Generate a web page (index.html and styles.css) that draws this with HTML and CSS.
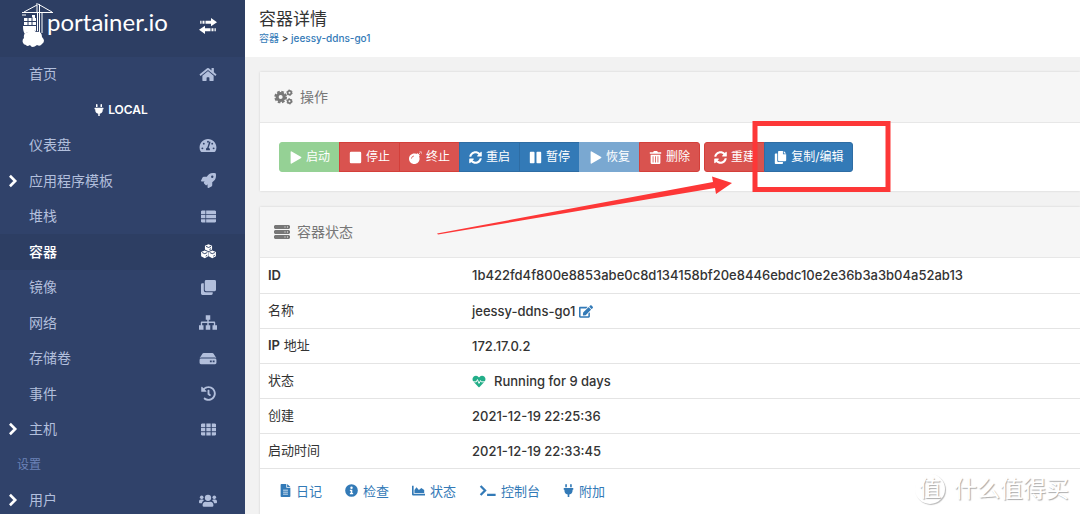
FILE: index.html
```html
<!DOCTYPE html>
<html lang="zh-CN">
<head>
<meta charset="utf-8">
<title>容器详情</title>
<link rel="stylesheet" href="styles.css">
</head>
<body>
<svg class="sprite" aria-hidden="true">
  <symbol id="home" viewBox="0 0 576 512"><path d="M280.37 148.26L96 300.11V464a16 16 0 0 0 16 16l112.06-.29a16 16 0 0 0 15.92-16V368a16 16 0 0 1 16-16h64a16 16 0 0 1 16 16v95.64a16 16 0 0 0 16 16.05L464 480a16 16 0 0 0 16-16V300L295.67 148.26a12.19 12.19 0 0 0-15.3 0zM571.6 251.47L488 182.56V44.05a12 12 0 0 0-12-12h-56a12 12 0 0 0-12 12v72.61L318.47 43a48 48 0 0 0-61 0L4.34 251.47a12 12 0 0 0-1.6 16.9l25.5 31A12 12 0 0 0 45.15 301l235.22-193.74a12.19 12.19 0 0 1 15.3 0L530.9 301a12 12 0 0 0 16.9-1.6l25.5-31a12 12 0 0 0-1.7-16.93z"/></symbol>
  <symbol id="plug" viewBox="0 0 384 512"><path d="M320 32a32 32 0 0 0-64 0v96h64zm48 128H16A16 16 0 0 0 0 176v32a16 16 0 0 0 16 16h16v32a160.07 160.07 0 0 0 128 156.8V512h64v-99.2A160.07 160.07 0 0 0 352 256v-32h16a16 16 0 0 0 16-16v-32a16 16 0 0 0-16-16zM128 32a32 32 0 0 0-64 0v96h64z"/></symbol>
  <symbol id="gauge" viewBox="0 0 576 512"><path fill-rule="evenodd" d="M288 32C129 32 0 161 0 320c0 53 14 102 39 145 6 10 16 15 27 15h444c11 0 21-5 27-15 25-43 39-92 39-145C576 161 447 32 288 32zM288 96a32 32 0 1 1 0 64 32 32 0 0 1 0-64zM96 384a32 32 0 1 1 0-64 32 32 0 0 1 0 64zm48-160a32 32 0 1 1 0-64 32 32 0 0 1 0 64zm206 192H226c-15-35-3-82 38-94l61-184c4-13 18-20 30-16 13 4 20 18 16 30l-61 184c38 17 54 50 40 80zm82-192a32 32 0 1 1 0-64 32 32 0 0 1 0 64zm48 160a32 32 0 1 1 0-64 32 32 0 0 1 0 64z"/></symbol>
  <symbol id="rocket" viewBox="0 0 512 512"><path d="M505.12 19.09c-1.19-5.53-6.66-11-12.21-12.18C460.72 0 435.51 0 410.41 0 307.18 0 245.27 55.2 199.05 128H94.84c-16.35.02-35.56 11.88-42.89 26.48L2.52 253.3A28.4 28.4 0 0 0 0 264a24 24 0 0 0 24 24h103.82l-22.48 22.47c-11.36 11.36-13 32.26 0 45.25l50.91 50.9c11.15 11.19 32.15 13.16 45.27 0L224 384.16V488a24 24 0 0 0 24 24 28.56 28.56 0 0 0 10.71-2.52l98.73-49.39c14.63-7.3 26.51-26.5 26.51-42.86V312.8C456.54 266.48 512 204.39 512 101.7c.08-25.2.08-50.4-6.88-82.61zM384.04 168a40 40 0 1 1 40-40 40 40 0 0 1-40 40z"/></symbol>
  <symbol id="list" viewBox="0 0 16 16"><path d="M1 1.5h3.7v3.7H0V2.5zM5.5 1.5H15l1 1v2.7H5.500zM0 6.100h4.700v3.800H0zM5.500 6.100H16v3.800H5.500zM0 10.800h4.700v3.700H1l-1-1zM5.500 10.800H16v2.700l-1 1H5.500z"/></symbol>
  <symbol id="cubes" viewBox="0 0 16 16"><path d="M8 .3l3.800 1.600v4L8 7.700 4.200 5.900V1.900zM4 6.900l3.800 1.700v4.400L4 15.100.100 13V8.600zM12 6.900l3.900 1.700V13L12 15.100 8.200 13V8.600z"/><path class="cut" d="M5.300 2.500L8 3.700l2.700-1.200M9 5.800l1.700-.8M1.200 9.100L4 10.300l2.700-1.200M5 13l1.600-1M9.300 9.100l2.700 1.200 2.800-1.200M13 13l1.700-1"/></symbol>
  <symbol id="clone" viewBox="0 0 16 16"><path d="M5.500 0h9A1.500 1.500 0 0 1 16 1.500v9a1.500 1.500 0 0 1-1.500 1.500h-9A1.500 1.500 0 0 1 4 10.500v-9A1.500 1.500 0 0 1 5.500 0zM3 3.500V11a2 2 0 0 0 2 2h7.500v1.500A1.500 1.500 0 0 1 11 16H1.500A1.500 1.500 0 0 1 0 14.500V5a1.500 1.500 0 0 1 1.500-1.500z"/></symbol>
  <symbol id="sitemap" viewBox="0 0 20 16"><path d="M7.500 0h5v5h-1.700v2H17q1 0 1 1v3h2v5h-5v-5h1.500V8.500h-5.700V11h1.700v5h-5v-5h1.700V8.500H3.500V11H5v5H0v-5h2V8q0-1 1-1h6.200V5H7.500z"/></symbol>
  <symbol id="disk" viewBox="0 0 18 16"><path fill-rule="evenodd" d="M4.500 2h9q1 0 1.500.8L18 7.600Q17.400 7 16 7H2Q.600 7 0 7.600L3 2.800Q3.500 2 4.500 2zM1.500 8h15Q18 8 18 9.500v3q0 1.500-1.500 1.500h-15Q0 14 0 12.500v-3Q0 8 1.500 8zM11 10v2h2v-2zM14 10v2h2v-2z"/></symbol>
  <symbol id="history" viewBox="0 0 512 512"><path d="M504 255.53c.25 136.64-111.18 248.37-247.82 248.47-59 .04-113.22-20.53-155.82-54.91-11.08-8.94-11.9-25.54-1.84-35.61l11.27-11.26c8.6-8.61 22.35-9.56 31.89-1.99C173.06 425.14 212.78 440 256 440c101.7 0 184-82.31 184-184 0-101.7-82.31-184-184-184-48.81 0-93.15 18.97-126.07 49.93l50.76 50.76c10.08 10.08 2.94 27.31-11.32 27.31H24c-8.84 0-16-7.16-16-16V38.63c0-14.26 17.23-21.4 27.31-11.32l49.38 49.38C129.21 34.14 189.55 8 256 8c136.81 0 247.75 110.78 248 247.53zm-180.91 78.79l9.82-12.63c8.14-10.47 6.25-25.55-4.21-33.68L288 256.35V152c0-13.25-10.75-24-24-24h-16c-13.25 0-24 10.75-24 24v135.65l65.41 50.88c10.46 8.13 25.54 6.25 33.68-4.21z"/></symbol>
  <symbol id="grid" viewBox="0 0 16 16"><path d="M0 2.500l1-1h3.500v3.700H0zM5.700 1.500h4.600v3.700H5.700zM11.500 1.500H15l1 1v2.700h-4.500zM0 6.200h4.500v3.600H0zM5.700 6.200h4.600v3.600H5.700zM11.500 6.200H16v3.600h-4.500zM0 10.800h4.500v3.700H1l-1-1zM5.700 10.800h4.600v3.700H5.700zM11.500 10.800H16v2.700l-1 1h-3.500z"/></symbol>
  <symbol id="users" viewBox="0 0 20 16"><circle cx="10" cy="5" r="3.500"/><circle cx="3" cy="4.500" r="2"/><circle cx="17" cy="4.500" r="2"/><path d="M4 13.500V13q0-3.500 3.500-3.700 2.500 1 5 0Q16 9.500 16 13v.5q0 1.500-1.500 1.500h-9Q4 15 4 13.500zM0 10V9q0-2 2-2h2q1 0 1.500.6Q3.500 8.700 3.200 11H1q-1 0-1-1zM20 10V9q0-2-2-2h-2q-1 0-1.500.6 2 1.100 2.300 3.400H19q1 0 1-1z"/></symbol>
  <symbol id="chevron" viewBox="0 0 16 16"><path d="M4.500 2l6 6-6 6" fill="none" stroke="currentColor" stroke-width="3"/></symbol>
  <symbol id="swap" viewBox="0 0 18 16"><path d="M12 0l6 4.200-6 4V5.700H6.500v-3H12zM3.500 2.700h2v3h-2zM1.200 2.700h1.300v3H1.200zM6 7.800v2.500h5.500v3H6V16l-6-4.200zM12.500 10.300h2v3h-2zM15.500 10.300h1.300v3h-1.300z"/></symbol>
  <symbol id="cogs" viewBox="0 0 20 16"><g fill="none" stroke="currentColor"><circle cx="7" cy="8" r="3.700" stroke-width="3.200"/><circle cx="7" cy="8" r="5.700" stroke-width="2" stroke-dasharray="2.800 1.680"/><circle cx="16.300" cy="3.500" r="1.900" stroke-width="1.700"/><circle cx="16.300" cy="3.500" r="2.900" stroke-width="1" stroke-dasharray="1.500 1.540"/><circle cx="16.300" cy="12.500" r="1.900" stroke-width="1.700"/><circle cx="16.300" cy="12.500" r="2.900" stroke-width="1" stroke-dasharray="1.500 1.540"/></g></symbol>
  <symbol id="server" viewBox="0 0 16 16"><path fill-rule="evenodd" d="M1 1h14l1 1v2l-1 1H1L0 4V2zM1 6h14l1 1v2l-1 1H1L0 9V7zM1 11h14l1 1v2l-1 1H1l-1-1v-2zM10.500 2.500v1h1v-1zM13 2.500v1h1v-1zM10.500 7.500v1h1v-1zM13 7.500v1h1v-1zM10.500 12.500v1h1v-1zM13 12.500v1h1v-1z"/></symbol>
  <symbol id="play" viewBox="0 0 16 16"><path d="M2 1.200Q2-.300 3.300.500l11.200 6.600q1.500.900 0 1.800L3.300 15.500Q2 16.300 2 14.800z"/></symbol>
  <symbol id="stop" viewBox="0 0 16 16"><rect x="1" y="1" width="14" height="14" rx="1.500"/></symbol>
  <symbol id="pause" viewBox="0 0 16 16"><rect x="1" y="1" width="5.800" height="14" rx="1"/><rect x="9.200" y="1" width="5.800" height="14" rx="1"/></symbol>
  <symbol id="bomb" viewBox="0 0 512 512"><path d="M440.500 88.500l-52 52L415 167c9.400 9.400 9.400 24.600 0 33.900l-17.400 17.400c11.800 26.100 18.400 55.100 18.400 85.600 0 114.900-93.100 208-208 208S0 418.900 0 304 93.100 96 208 96c30.500 0 59.500 6.600 85.600 18.400L311 97c9.400-9.400 24.600-9.400 33.900 0l26.500 26.500 52-52zM448 0h16v55h-16zM457 64h55v16h-55zM470 50l30-34 10 10-32 32zM410 16l34 34-10 10-34-34zM470 90l10-10 30 34-10 10z"/><path class="cut wide" d="M95 300q5-90 100-105"/></symbol>
  <symbol id="sync" viewBox="0 0 512 512"><path d="M370.720 133.280C339.460 104 298.890 87.960 255.850 88c-77.460.070-144.330 53.180-162.790 126.850-1.350 5.360-6.130 9.150-11.650 9.150H24.100c-7.500 0-13.190-6.810-11.800-14.180C33.930 94.920 134.810 8 256 8c66.450 0 126.790 26.140 171.320 68.690L463 41c15.150-15.150 41-4.440 41 16.940V192c0 13.250-10.750 24-24 24H345.940c-21.380 0-32.090-25.850-16.970-40.970zM32 296h134.060c21.380 0 32.090 25.850 16.970 40.970l-41.750 41.750c31.260 29.270 71.840 45.320 114.880 45.280 77.420-.070 144.310-53.140 162.780-126.850 1.350-5.360 6.130-9.150 11.650-9.150h57.310c7.500 0 13.190 6.810 11.800 14.180C478.070 417.080 377.190 504 256 504c-66.450 0-126.790-26.140-171.320-68.690L49 471c-15.150 15.150-41 4.440-41-16.940V320c0-13.250 10.750-24 24-24z"/></symbol>
  <symbol id="trash" viewBox="0 0 16 16"><path fill-rule="evenodd" d="M1 1.500h4L6 0h4l1 1.500h4v2H1zM2 4.500h12v10Q14 16 12.500 16h-9Q2 16 2 14.500zM4.500 6.500V14h1V6.500zM7.500 6.500V14h1V6.500zM10.500 6.500V14h1V6.500z"/></symbol>
  <symbol id="copy" viewBox="0 0 16 16"><path d="M6 0h5v4h4v7.500q0 1-1 1H6q-1 0-1-1V1q0-1 1-1zM12 0l3 3h-3zM4 3v9q0 1.500 1.500 1.500H11V15q0 1-1 1H2q-1 0-1-1V4q0-1 1-1z"/></symbol>
  <symbol id="edit" viewBox="0 0 576 512"><path d="M402.600 83.200l90.200 90.200c3.800 3.800 3.800 10 0 13.800L274.400 405.600l-92.800 10.300c-12.400 1.400-22.900-9.100-21.500-21.500l10.300-92.800L388.800 83.200c3.800-3.800 10-3.800 13.800 0zm162-22.900l-48.800-48.800c-15.200-15.200-39.900-15.200-55.200 0l-35.400 35.400c-3.800 3.800-3.800 10 0 13.800l90.200 90.200c3.800 3.800 10 3.800 13.800 0l35.400-35.400c15.200-15.300 15.200-40 0-55.200zM384 346.200V448H64V128h229.800c3.200 0 6.200-1.300 8.500-3.500l40-40c7.600-7.600 2.200-20.500-8.500-20.500H48C21.500 64 0 85.500 0 112v352c0 26.500 21.500 48 48 48h352c26.500 0 48-21.500 48-48V306.200c0-10.700-12.900-16-20.500-8.500l-40 40c-2.200 2.300-3.500 5.300-3.500 8.500z"/></symbol>
  <symbol id="heart" viewBox="0 0 512 512"><path d="M462.300 62.600C407.500 15.900 326 24.300 275.700 76.200L256 96.500l-19.700-20.300C186.100 24.300 104.500 15.900 49.700 62.600c-62.800 53.600-66.100 149.800-9.900 207.900l193.500 199.800c12.500 12.900 32.800 12.900 45.300 0l193.500-199.800c56.300-58.100 53-154.300-9.800-207.900z"/><path d="M0 270h150l45-90 62 150 60-110 28 50h167" fill="none" stroke="#fff" stroke-width="38"/></symbol>
  <symbol id="file" viewBox="0 0 12 16"><path fill-rule="evenodd" d="M1 0h6v4.500h5V15q0 1-1 1H1q-1 0-1-1V1q0-1 1-1zM8 0l4 3.700H8zM3 7v1h6V7zM3 9.500v1h6v-1zM3 12v1h6v-1z"/></symbol>
  <symbol id="info" viewBox="0 0 16 16"><path fill-rule="evenodd" d="M8 .200a7.800 7.800 0 1 0 0 15.600A7.800 7.800 0 0 0 8 .200zM8 3a1.500 1.500 0 1 1 0 3 1.500 1.500 0 0 1 0-3zM6 7h3v4h1v1.500H6V11h1V8.500H6z"/></symbol>
  <symbol id="chart" viewBox="0 0 16 16"><path d="M0 2h2v10h14v2H1q-1 0-1-1zM3 11V7.500L5.500 4l3 3.500L11.500 5l3.500 2.500V11z"/></symbol>
  <symbol id="terminal" viewBox="0 0 20 16"><path d="M1.500 2.500L7 8l-5.500 5.500M9.500 13.500H20" fill="none" stroke="currentColor" stroke-width="2.800"/></symbol>
</svg>

<div class="page">
  <nav class="sidebar" aria-label="主导航">
    <header class="brand">
      <a class="logo" href="#">
        <svg class="crane" viewBox="0 0 32 44" aria-hidden="true">
          <g fill="none" stroke="#fff" stroke-width="1"><path d="M0 9.500h31M15 2L2 9M16 1l14 8M15 0v10M17.500 1v29M15.500 10v18M20 10v20M0 12h4"/></g>
          <path fill="#fff" d="M10 12h3v3h-3zM2 15h12v3H2zM2 19h12v3H2zM1 23h13v5q-2-1-4 1-5-1-7 2-2-2-2-8z"/>
          <path class="seams" d="M6 15v8M10 14v9"/>
          <path fill="#fff" d="M4 42a4 4 0 0 1-2-7q-1-5 4-6 4-5 8 0 6-1 6 5 4 4 0 7-2 3-5 1-5 4-7 0-3 2-4 0z"/>
        </svg>
        <span class="wordmark">portainer.io</span>
      </a>
      <button class="toggle" aria-label="收起侧栏"><svg class="icon"><use href="#swap"/></svg></button>
    </header>
    <ul class="menu">
      <li><a href="#"><span>首页</span><svg class="icon wide"><use href="#home"/></svg></a></li>
      <li class="endpoint"><svg class="icon small"><use href="#plug"/></svg>LOCAL</li>
      <li><a href="#"><span>仪表盘</span><svg class="icon wide"><use href="#gauge"/></svg></a></li>
      <li><a href="#"><svg class="icon arrow"><use href="#chevron"/></svg><span>应用程序模板</span><svg class="icon"><use href="#rocket"/></svg></a></li>
      <li><a href="#"><span>堆栈</span><svg class="icon"><use href="#list"/></svg></a></li>
      <li class="active"><a href="#"><span>容器</span><svg class="icon"><use href="#cubes"/></svg></a></li>
      <li><a href="#"><span>镜像</span><svg class="icon"><use href="#clone"/></svg></a></li>
      <li><a href="#"><span>网络</span><svg class="icon wide"><use href="#sitemap"/></svg></a></li>
      <li><a href="#"><span>存储卷</span><svg class="icon wide"><use href="#disk"/></svg></a></li>
      <li><a href="#"><span>事件</span><svg class="icon"><use href="#history"/></svg></a></li>
      <li><a href="#"><svg class="icon arrow"><use href="#chevron"/></svg><span>主机</span><svg class="icon"><use href="#grid"/></svg></a></li>
      <li class="section">设置</li>
      <li><a href="#"><svg class="icon arrow"><use href="#chevron"/></svg><span>用户</span><svg class="icon wide"><use href="#users"/></svg></a></li>
    </ul>
  </nav>

  <main class="content">
    <header class="title">
      <h1>容器详情</h1>
      <p class="crumbs"><a href="#">容器</a> &gt; <a href="#">jeessy-ddns-go1</a></p>
    </header>
    <div class="panels">
      <section class="panel">
        <h2><svg class="icon cogs"><use href="#cogs"/></svg>操作</h2>
        <div class="actions">
          <div class="group">
            <button class="green" disabled><svg class="icon"><use href="#play"/></svg>启动</button>
            <button class="red"><svg class="icon"><use href="#stop"/></svg>停止</button>
            <button class="red"><svg class="icon"><use href="#bomb"/></svg>终止</button>
            <button class="blue"><svg class="icon"><use href="#sync"/></svg>重启</button>
            <button class="blue"><svg class="icon"><use href="#pause"/></svg>暂停</button>
            <button class="blue" disabled><svg class="icon"><use href="#play"/></svg>恢复</button>
            <button class="red"><svg class="icon"><use href="#trash"/></svg>删除</button>
          </div>
          <div class="group">
            <button class="red"><svg class="icon"><use href="#sync"/></svg>重建</button>
            <button class="blue"><svg class="icon"><use href="#copy"/></svg>复制/编辑</button>
          </div>
        </div>
      </section>
      <section class="panel">
        <h2><svg class="icon"><use href="#server"/></svg>容器状态</h2>
        <table>
          <tbody>
            <tr><th scope="row"><b>ID</b></th><td>1b422fd4f800e8853abe0c8d134158bf20e8446ebdc10e2e36b3a3b04a52ab13</td></tr>
            <tr><th scope="row">名称</th><td>jeessy-ddns-go1 <a href="#" aria-label="编辑名称"><svg class="icon"><use href="#edit"/></svg></a></td></tr>
            <tr><th scope="row"><b>IP</b> 地址</th><td>172.17.0.2</td></tr>
            <tr><th scope="row">状态</th><td><svg class="icon health"><use href="#heart"/></svg>Running for 9 days</td></tr>
            <tr><th scope="row">创建</th><td>2021-12-19 22:25:36</td></tr>
            <tr><th scope="row">启动时间</th><td>2021-12-19 22:33:45</td></tr>
          </tbody>
        </table>
        <div class="links">
          <a href="#"><svg class="icon slim"><use href="#file"/></svg>日记</a>
          <a href="#"><svg class="icon"><use href="#info"/></svg>检查</a>
          <a href="#"><svg class="icon"><use href="#chart"/></svg>状态</a>
          <a href="#"><svg class="icon prompt"><use href="#terminal"/></svg>控制台</a>
          <a href="#"><svg class="icon slim"><use href="#plug"/></svg>附加</a>
        </div>
      </section>
    </div>
  </main>

  <svg class="annotation" width="900" height="250" viewBox="0 0 900 250" aria-hidden="true">
    <rect x="755" y="123.500" width="133" height="66" fill="none" stroke="#fd3737" stroke-width="5"/>
    <path fill="#fd3737" d="M437 233.500L713 182l-1-5.500 20 6.500-16 11-1-6L438 234.500z"/>
  </svg>
  <div class="watermark"><span class="seal">值</span><span>什么值得买</span></div>
</div>
</body>
</html>
```
FILE: styles.css
```css
* { box-sizing: border-box; }

body {
  margin: 0;
  overflow: hidden;
  background: #f2f2f2;
  color: #333;
  font: 13px/20px Inter, "Noto Sans CJK SC", sans-serif;
}

a { color: #337ab7; text-decoration: none; }
h1, h2, p, ul { margin: 0; padding: 0; font-weight: 400; }
button { font: inherit; }

.sprite { position: absolute; width: 0; height: 0; }
.icon { width: 16px; height: 16px; fill: currentColor; flex: none; }
.cut { fill: none; stroke: #2d3e63; stroke-width: 1; }
.cut.wide { stroke: #d9534f; stroke-width: 32; }

.page { position: relative; display: flex; height: 100vh; overflow: hidden; }

.sidebar { flex: none; width: 245px; background: #30426a; color: #b2bfdc; }
.brand {
  display: flex;
  align-items: flex-start;
  justify-content: space-between;
  height: 57px;
  padding: 3px 28px 0 22px;
  background: #2d3e63;
}
.logo { display: flex; color: #fff; }
.crane { width: 32px; height: 44px; }
.seams { stroke: #2d3e63; stroke-width: 1; }
.wordmark { margin-left: -7px; padding-top: 3px; font: 400 24px/32px Lato, sans-serif; }
.toggle { padding: 15px 0 0; border: 0; background: none; color: #fff; line-height: 0; }
.toggle .icon { width: 18px; }

.menu { list-style: none; font-size: 14px; }
.menu li { display: flex; align-items: center; height: 35px; }
.menu li:nth-child(even) { height: 36px; }
.menu a {
  position: relative;
  flex: 1;
  display: flex;
  align-items: center;
  padding: 0 29px 1px;
  color: #b2bfdc;
}
.menu a span { flex: 1; }
.menu .icon { width: 15px; height: 15px; }
.menu .icon.wide { width: 18px; margin-right: -1px; }
.menu .arrow { position: absolute; left: 6px; width: 14px; height: 14px; color: #fff; }
.menu .active { background: #2d3e63; }
.menu .active a { color: #fff; font-weight: 500; }
.menu .endpoint { justify-content: center; gap: 4px; padding-right: 3px; color: #fff; font-size: 12px; font-weight: 600; }
.menu .endpoint .icon { width: 10px; height: 12px; }
.menu .section { padding-left: 17px; color: #6c82b8; font-size: 12px; }

.content { flex: 1; min-width: 0; }
.title { height: 57px; padding: 7px 14px; background: #fff; }
.title h1 { font-size: 17px; line-height: 24px; }
.crumbs { font-size: 10px; line-height: 14px; font-weight: 500; }
.crumbs a:first-child { font-weight: 400; }

.panels { display: grid; gap: 16px; padding: 15px 0 0 15px; }
.panel { background: #fff; box-shadow: 0 0 2px #ccc; }
.panel h2 {
  display: flex;
  align-items: center;
  gap: 7px;
  height: 51px;
  padding: 0 14px;
  border-bottom: 1px solid #e7e7e7;
  background: #f6f6f6;
  color: #777;
  font-size: 14px;
}
.panel h2 .cogs { width: 19px; }

.actions { display: flex; gap: 4px; padding: 19px; }
.group { display: flex; }
.group button {
  display: flex;
  align-items: center;
  gap: 4px;
  height: 30px;
  padding: 0 9px;
  border-width: 1px;
  border-style: solid;
  color: #fff;
  font-size: 12px;
}
.group button + button { margin-left: -1px; }
.group button:first-child { border-radius: 3px 0 0 3px; }
.group button:last-child { border-radius: 0 3px 3px 0; }
.group .icon { width: 13px; height: 13px; }
.green { background: #5cb85c; border-color: #5cb85c; }
.red { background: #d9534f; border-color: #d43f3a; }
.blue { background: #337ab7; border-color: #2e6da4; }
.green:disabled { background: #95d195; border-color: #95d195; }
.blue:disabled { background: #7aa8d1; border-color: #7aa8d1; }

table { width: 100%; border-collapse: collapse; }
th, td { height: 35px; padding: 0 8px; border-bottom: 1px solid #e4e4e4; text-align: left; }
th { width: 25%; padding-bottom: 1px; font-weight: 400; }
th b { font-weight: 600; }
td { padding-left: 7px; font-weight: 500; }
td .icon { width: 14px; height: 13px; vertical-align: -2px; }
td .health { margin-right: 8px; color: #23ae89; }

.links { display: flex; gap: 23px; padding: 12px 20px 20px; }
.links a { display: flex; align-items: center; gap: 5px; }
.links .icon { width: 13px; height: 13px; }
.links .slim { width: 11px; }
.links .prompt { width: 17px; }

.annotation { position: absolute; left: 0; top: 0; pointer-events: none; }
.watermark {
  position: absolute;
  right: 11px;
  bottom: 9px;
  display: flex;
  align-items: center;
  gap: 9px;
  color: #fff;
  font-size: 23px;
  line-height: 32px;
  text-shadow: 1px 1px 1px #aaa;
}
.seal {
  width: 30px;
  height: 30px;
  border-radius: 50%;
  box-shadow: 1px 1px 1px #bbb;
  font-size: 22px;
  line-height: 28px;
  text-align: center;
}
```
